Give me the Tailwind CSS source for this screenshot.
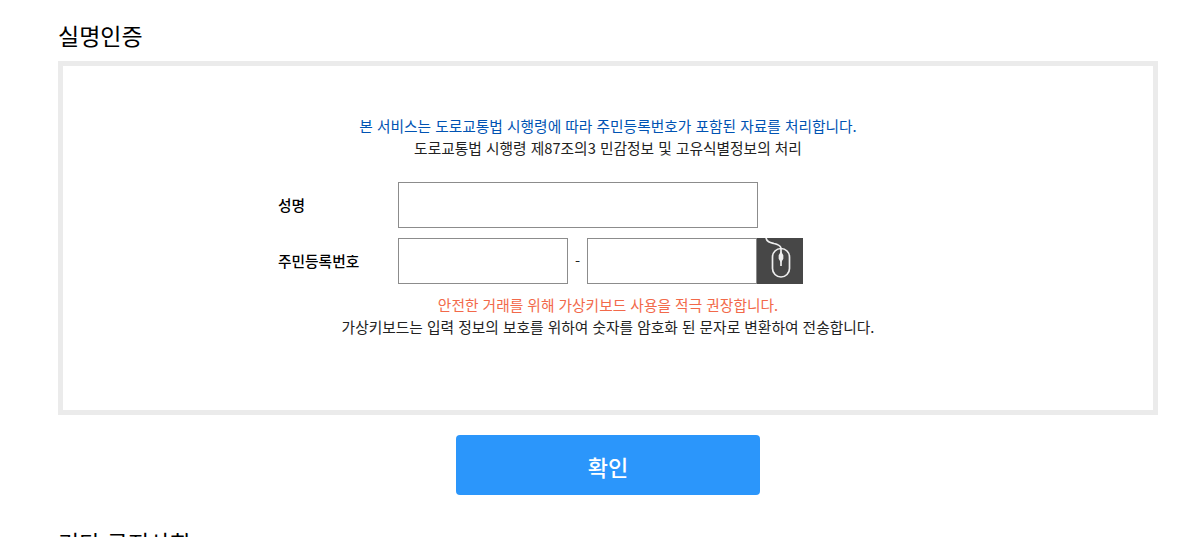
<!DOCTYPE html>
<html lang="ko">
<head>
    <meta charset="UTF-8">
    <title>실명인증</title>
    <script src="https://cdn.jsdelivr.net/npm/@tailwindcss/browser@4"></script>
</head>
<body class="bg-white h-[537px] overflow-hidden font-['Noto_Sans_CJK_KR','Noto_Sans',sans-serif] text-[#222]">
    <div class="w-[1100px] ml-[58px]">
        <h2 class="h-[61px] pt-[17px] text-[23px] leading-[36px] font-normal text-black">실명인증</h2>

        <!-- Form box -->
        <div class="h-[354px] border-[5px] border-[#ebebeb] pt-[49px]">
            <div class="text-center text-[14.72px] leading-[22px]">
                <p class="text-[#0053b3]">본 서비스는 도로교통법 시행령에 따라 주민등록번호가 포함된 자료를 처리합니다.</p>
                <p>도로교통법 시행령 제87조의3 민감정보 및 고유식별정보의 처리</p>
            </div>

            <div class="mt-[23px] ml-[215px] flex flex-col gap-[10px]">
                <div class="flex items-center">
                    <label class="w-[120px] text-[14.72px] font-medium text-black">성명</label>
                    <input type="text" class="w-[360px] h-[46px] border border-[#8c8c8c]">
                </div>
                <div class="flex items-center">
                    <label class="w-[120px] text-[14.72px] font-medium text-black">주민등록번호</label>
                    <input type="text" class="w-[170px] h-[46px] border border-[#8c8c8c]">
                    <span class="w-[19px] text-center text-[14.72px]">-</span>
                    <input type="text" class="w-[170px] h-[46px] border border-[#8c8c8c]">
                    <button class="w-[46px] h-[46px] bg-[#474747]">
                        <svg width="46" height="46" viewBox="0 0 46 46" fill="none" stroke="#eeeeee" stroke-width="1.7">
                            <path d="M9 0c1 4 4 4.500 8 5.500 4 .8 6 1.500 7 4.500"/>
                            <rect x="15.500" y="10.500" width="17" height="28.500" rx="8.500"/>
                            <path d="M24 10.500v5M24 23v5"/>
                            <path d="M24 15l1.500 2.500v3l-1.500 2.500-1.500-2.500v-3z" fill="#eeeeee"/>
                        </svg>
                    </button>
                </div>
            </div>

            <div class="mt-[10px] text-center text-[14.72px] leading-[22px]">
                <p class="text-[#f2694a]">안전한 거래를 위해 가상키보드 사용을 적극 권장합니다.</p>
                <p>가상키보드는 입력 정보의 보호를 위하여 숫자를 암호화 된 문자로 변환하여 전송합니다.</p>
            </div>
        </div>

        <div class="mt-5 flex justify-center">
            <button class="w-[304px] h-[60px] pt-[2px] rounded bg-[#2b96fb] text-white text-[22px] font-medium">확인</button>
        </div>

        <h2 class="mt-[29px] text-[23px] leading-[36px] font-normal text-black">기타 공지사항</h2>
    </div>
</body>
</html>
